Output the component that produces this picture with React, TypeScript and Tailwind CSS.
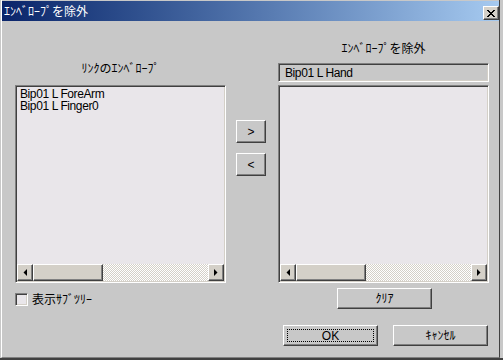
import React from "react";

const F = "font-['Liberation_Sans','Noto_Sans_CJK_JP',sans-serif]";

const raised =
  "border border-t-white border-l-white border-b-[#404040] border-r-[#404040] shadow-[inset_-1px_-1px_0_#808080]";
const sunken =
  "border border-t-[#808080] border-l-[#808080] border-b-white border-r-white shadow-[inset_1px_1px_0_#404040,inset_-1px_-1px_0_#d4d0c8]";

function Arrow({ dir }: { dir: "left" | "right" }) {
  return (
    <svg width="4" height="7" viewBox="0 0 4 7" className="block">
      {dir === "left" ? (
        <polygon points="4,0 4,7 0.5,3.5" fill="#000" />
      ) : (
        <polygon points="0,0 0,7 3.5,3.5" fill="#000" />
      )}
    </svg>
  );
}

function HScroll({ thumb }: { thumb: number }) {
  return (
    <div className="flex h-[17px] w-full">
      <div className={`${raised} bg-[#d4d0c8] w-[16px] h-full flex items-center justify-center`}>
        <Arrow dir="left" />
      </div>
      <div className={`${raised} bg-[#d4d0c8] w-[70px] h-full`} />
      <div className="flex-1 h-full [background:repeating-conic-gradient(#ffffff_0_25%,#d4d0c8_0_50%)_0_0/2px_2px]" />
      <div className={`${raised} bg-[#d4d0c8] w-[16px] h-full flex items-center justify-center`}>
        <Arrow dir="right" />
      </div>
    </div>
  );
}

function ListBox({ items }: { items: string[] }) {
  return (
    <div className={`${sunken} p-px w-[211px] h-[198px] bg-[#e9e6ea] flex flex-col`}>
      <div className="flex-1 pt-px pl-[3px] tracking-[-0.4px]">
        {items.map((t) => (
          <div key={t} className="h-[12px] leading-[12px] whitespace-pre">
            {t}
          </div>
        ))}
      </div>
      <HScroll thumb={70} />
    </div>
  );
}

function Button({
  children,
  className = "",
  focus = false,
}: {
  children: React.ReactNode;
  className?: string;
  focus?: boolean;
}) {
  return (
    <div
      className={`${raised} relative bg-[#c8c8c8] flex items-center justify-center leading-[12px] ${className}`}
    >
      {focus && (
        <div className="absolute left-[3px] top-[3px] right-[3px] bottom-[3px] border border-dotted border-black" />
      )}
      <span className="relative">{children}</span>
    </div>
  );
}

export default function App() {
  return (
    <div
      className={`${F} w-[503px] h-[360px] bg-[#c8c8c8] text-[12px] leading-[12px] text-black overflow-hidden border-b-2 border-b-[#404040]`}
    >
      <div className="ml-px w-[499px] h-[358px] border-l border-l-white border-r border-r-[#404040] border-b border-b-[#808080] pt-px flex flex-col">
        {/* Title bar */}
        <div className="h-[20px] bg-gradient-to-r from-[#0a246a] to-[#a6caf0] flex items-center justify-between pl-[2px]">
          <span className="text-white pt-[2px]">ｴﾝﾍﾞﾛｰﾌﾟを除外</span>
          <div
            className={`${raised} bg-[#d4d0c8] w-[16px] h-[14px] mt-[4px] flex items-center justify-center`}
          >
            <svg width="8" height="7" viewBox="0 0 8 7" className="block" shapeRendering="crispEdges">
              <path d="M0 0h2v1h-2z M6 0h2v1h-2z M1 1h2v1h-2z M5 1h2v1h-2z M2 2h4v1h-4z M3 3h2v1h-2z M2 4h4v1h-4z M1 5h2v1h-2z M5 5h2v1h-2z M0 6h2v1h-2z M6 6h2v1h-2z" fill="#000" />
            </svg>
          </div>
        </div>

        {/* Body */}
        <div className="flex pl-[13px]">
          {/* Left column */}
          <div className="w-[211px] flex flex-col">
            <div className="mt-[42px] h-[12px] text-center">ﾘﾝｸのｴﾝﾍﾞﾛｰﾌﾟ</div>
            <div className="mt-[10px]">
              <ListBox items={["Bip01 L ForeArm", "Bip01 L Finger0"]} />
            </div>
            <div className="mt-[10px] flex items-center gap-[4px]">
              <div className={`${sunken} w-[13px] h-[13px] bg-[#e9e6ea]`} />
              <span>表示ｻﾌﾞﾂﾘｰ</span>
            </div>
          </div>

          {/* Middle column */}
          <div className="ml-[10px] w-[30px] flex flex-col">
            <Button className="mt-[99px] h-[23px] w-[30px]">&gt;</Button>
            <Button className="mt-[10px] h-[23px] w-[30px]">&lt;</Button>
          </div>

          {/* Right column */}
          <div className="ml-[12px] w-[211px] flex flex-col">
            <div className="mt-[22px] h-[12px] text-center">ｴﾝﾍﾞﾛｰﾌﾟを除外</div>
            <div
              className={`${sunken} mt-[8px] h-[19px] w-[211px] bg-[#c8c8c8] flex items-center pl-[6px] tracking-[-0.4px]`}
            >
              Bip01 L Hand
            </div>
            <div className="mt-[3px]">
              <ListBox items={[]} />
            </div>
            <div className="mt-[5px] flex justify-center pl-[2px]">
              <Button className="w-[95px] h-[21px]">ｸﾘｱ</Button>
            </div>
            <div className="mt-[16px] flex justify-end gap-[15px] pr-px">
              <Button className="w-[95px] h-[21px]" focus>
                OK
              </Button>
              <Button className="w-[95px] h-[21px]">ｷｬﾝｾﾙ</Button>
            </div>
          </div>
        </div>
      </div>
    </div>
  );
}
